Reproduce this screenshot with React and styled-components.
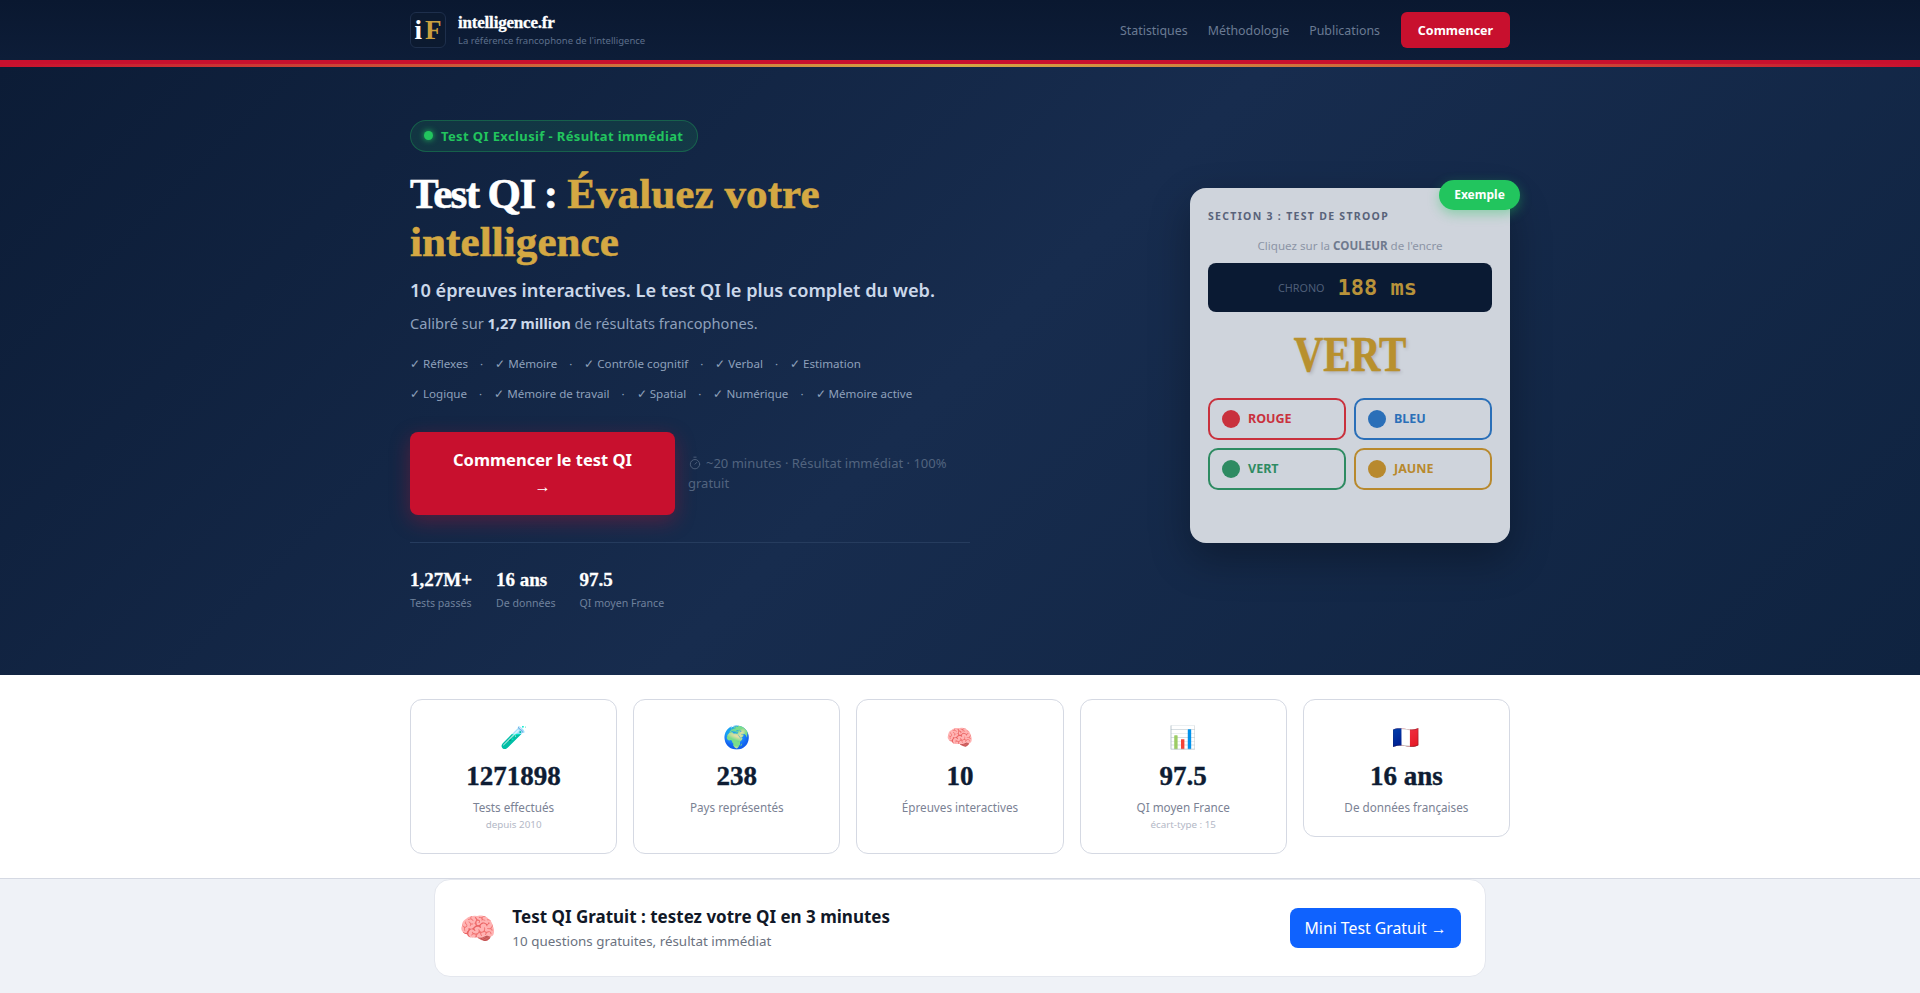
import styled, { createGlobalStyle } from "styled-components";
import { Timer as TimerIcon } from "lucide-react";

const sans = `"Noto Sans", "Liberation Sans", sans-serif`;
const serif = `"Liberation Serif", "DejaVu Serif", serif`;
const emoji = `"Noto Color Emoji", "Noto Sans", sans-serif`;

const GlobalStyle = createGlobalStyle`
  * { box-sizing: border-box; }
  html, body { margin: 0; padding: 0; background: #eff2f7; }
  body { font-family: ${sans}; }
`;

const Container = styled.div`
  width: 1100px;
  margin: 0 auto;
`;

const Nav = styled.nav`
  height: 60px;
  background: linear-gradient(180deg, #0a1830 0%, #0d1d38 100%);
`;

const NavInner = styled(Container)`
  height: 100%;
  display: flex;
  align-items: center;
  justify-content: space-between;
`;

const Brand = styled.div`
  display: flex;
  align-items: center;
  gap: 12px;
`;

const LogoBox = styled.div`
  width: 36px;
  height: 36px;
  border: 1px solid #1e2f4c;
  border-radius: 6px;
  background: #0c1a30;
  display: flex;
  align-items: center;
  justify-content: center;
  gap: 3px;
  font-family: ${serif};
  font-size: 27px;
  font-weight: 700;
  color: #fff;
`;

const LogoAccent = styled.span`
  color: #c9a040;
`;

const BrandText = styled.div`
  display: flex;
  flex-direction: column;
  gap: 1px;
`;

const BrandName = styled.div`
  font-family: ${serif};
  font-size: 17px;
  line-height: 20px;
  font-weight: 700;
  color: #fff;
  letter-spacing: -0.2px;
  -webkit-text-stroke: 0.3px #fff;
`;

const BrandTag = styled.div`
  font-size: 9.5px;
  line-height: 14px;
  color: #5d6f8b;
`;

const NavLinks = styled.div`
  display: flex;
  align-items: center;
  gap: 20px;
`;

const NavLink = styled.a`
  font-size: 12.4px;
  color: #6a7a93;
`;

const NavButton = styled.a`
  width: 109px;
  height: 36px;
  margin-left: 1px;
  border-radius: 6px;
  background: #c8102e;
  color: #fff;
  font-size: 12.5px;
  font-weight: 700;
  display: flex;
  align-items: center;
  justify-content: center;
`;

const RedLine = styled.div`
  height: 4px;
  background: #c8102e;
`;

const GoldLine = styled.div`
  height: 3px;
  background: linear-gradient(90deg, #c8102e 0%, #d4a843 50%, #c8102e 100%);
`;

const Hero = styled.section`
  height: 608px;
  background: linear-gradient(135deg, #0c1c36 0%, #172c4e 50%, #0f2340 100%);
`;

const HeroInner = styled(Container)`
  height: 100%;
  display: flex;
  justify-content: space-between;
  align-items: center;
  padding-bottom: 12px;
`;

const HeroLeft = styled.div`
  width: 560px;
`;

const Badge = styled.div`
  display: inline-flex;
  align-items: center;
  gap: 8px;
  height: 32px;
  padding: 0 14px 0 13px;
  border: 1px solid rgba(34, 197, 94, 0.3);
  border-radius: 16px;
  background: rgba(34, 197, 94, 0.12);
  color: #22c55e;
  font-size: 13px;
  font-weight: 700;
  letter-spacing: 0.38px;
`;

const BadgeDot = styled.span`
  width: 9px;
  height: 9px;
  border-radius: 50%;
  background: #22c55e;
  box-shadow: 0 0 6px #22c55e;
`;

const Title = styled.h1`
  margin: 18px 0 0;
  font-family: ${serif};
  font-size: 43px;
  line-height: 48px;
  font-weight: 700;
  color: #fff;
  -webkit-text-stroke: 0.6px currentColor;
`;

const TitleStart = styled.span`
  letter-spacing: -1.6px;
`;

const Gold = styled.span`
  color: #d4a843;
  letter-spacing: 0.1px;
`;

const Lead = styled.p`
  margin: 10px 0 0;
  font-size: 18.2px;
  line-height: 28px;
  font-weight: 600;
  color: #cbd8ea;
`;

const SubLead = styled.p`
  margin: 7px 0 0;
  font-size: 14.6px;
  line-height: 24px;
  color: #8ea0bb;
`;

const SubStrong = styled.strong`
  color: #cbd8ea;
`;

const Checks = styled.div`
  margin-top: 14px;
`;

const ChecksRow = styled.div`
  display: flex;
  gap: 12px;
  height: 30px;
  align-items: center;
  font-size: 11.6px;
  color: #8ea0bb;
`;

const CheckSep = styled.span`
  margin-right: 12px;
`;

const CtaRow = styled.div`
  display: flex;
  align-items: flex-start;
  gap: 13px;
  margin-top: 23px;
`;

const Cta = styled.a`
  width: 265px;
  height: 83px;
  flex: none;
  border-radius: 8px;
  background: #c8102e;
  box-shadow: 0 6px 20px rgba(200, 16, 46, 0.35);
  color: #fff;
  font-size: 16.5px;
  line-height: 26px;
  font-weight: 700;
  text-align: center;
  padding: 15px 36px;
`;

const CtaNote = styled.p`
  margin: 21px 0 0;
  font-size: 13px;
  line-height: 20px;
  color: #52647f;
`;

const NoteIcon = styled(TimerIcon)`
  width: 14px;
  height: 14px;
  margin-right: 4px;
  vertical-align: -2px;
`;

const HeroStats = styled.div`
  display: flex;
  gap: 24px;
  margin-top: 27px;
  padding-top: 25px;
  border-top: 1px solid #263c5e;
`;

const HeroStatValue = styled.div`
  font-family: ${serif};
  font-size: 19px;
  line-height: 24px;
  font-weight: 700;
  color: #fff;
  -webkit-text-stroke: 0.3px #fff;
`;

const HeroStatLabel = styled.div`
  margin-top: 3px;
  font-size: 10.6px;
  line-height: 16px;
  color: #6f819c;
`;

const DemoCard = styled.div`
  position: relative;
  width: 320px;
  height: 355px;
  padding: 18px;
  border-radius: 16px;
  background: #cfd4dc;
  box-shadow: 0 16px 40px rgba(0, 0, 0, 0.3);
`;

const DemoTag = styled.div`
  position: absolute;
  top: -8px;
  right: -10px;
  height: 30px;
  width: 81px;
  border-radius: 15px;
  background: #22c55e;
  box-shadow: 0 4px 12px rgba(34, 197, 94, 0.4);
  color: #fff;
  font-size: 12px;
  font-weight: 700;
  display: flex;
  align-items: center;
  justify-content: center;
`;

const DemoTitle = styled.div`
  font-size: 10.5px;
  line-height: 20px;
  font-weight: 700;
  letter-spacing: 1.3px;
  color: #59637a;
`;

const DemoHint = styled.div`
  margin-top: 10px;
  font-size: 11.6px;
  line-height: 20px;
  text-align: center;
  color: #8c95a6;
`;

const DemoHintStrong = styled.strong`
  color: #6f7a8e;
`;

const Timer = styled.div`
  margin-top: 7px;
  height: 49px;
  padding-right: 5px;
  border-radius: 8px;
  background: #0a1a33;
  display: flex;
  align-items: center;
  justify-content: center;
  gap: 13px;
`;

const TimerLabel = styled.span`
  font-size: 10.8px;
  color: #4e5e78;
`;

const TimerValue = styled.span`
  font-family: "DejaVu Sans Mono", "Liberation Mono", monospace;
  font-size: 22px;
  font-weight: 700;
  color: #b8923a;
`;

const StroopWord = styled.div`
  margin-top: 13px;
  height: 58px;
  font-family: ${serif};
  font-size: 50px;
  line-height: 58px;
  font-weight: 700;
  text-align: center;
  color: #b8902e;
  text-shadow: 2px 2px 4px rgba(0, 0, 0, 0.15);
  -webkit-text-stroke: 0.6px #b8902e;
  transform: scaleX(0.82);
`;

const Choices = styled.div`
  margin-top: 15px;
  display: grid;
  grid-template-columns: 1fr 1fr;
  gap: 8px;
`;

const Choice = styled.div`
  height: 42px;
  padding: 0 12px;
  display: flex;
  align-items: center;
  gap: 8px;
  border: 2px solid ${(p) => p.$color};
  border-radius: 10px;
  color: ${(p) => p.$color};
  font-size: 12.5px;
  font-weight: 700;
`;

const ChoiceDot = styled.span`
  width: 18px;
  height: 18px;
  border-radius: 50%;
  background: ${(p) => p.$color};
`;

const StatsSection = styled.section`
  height: 203px;
  padding-top: 24px;
  background: #fff;
`;

const StatsGrid = styled(Container)`
  display: grid;
  grid-template-columns: repeat(5, 1fr);
  gap: 16px;
`;

const StatCard = styled.div`
  height: ${(p) => (p.$short ? "138px" : "155px")};
  padding-top: 24px;
  border: 1px solid #d5d9e3;
  border-radius: 12px;
  background: #fff;
  text-align: center;
`;

const StatIcon = styled.div`
  font-family: ${emoji};
  font-size: 22px;
  line-height: 28px;
`;

const StatValue = styled.div`
  margin-top: 7px;
  font-family: ${serif};
  font-size: 27px;
  line-height: 34px;
  font-weight: 700;
  color: #0e1c33;
  -webkit-text-stroke: 0.4px #0e1c33;
`;

const StatLabel = styled.div`
  margin-top: 4px;
  font-size: 11.7px;
  line-height: 20px;
  color: #7b8294;
`;

const StatSub = styled.div`
  margin-top: 0;
  font-size: 9.8px;
  line-height: 16px;
  color: #b3b8c6;
`;

const Band = styled.section`
  height: 115px;
  border-top: 1px solid #d5d9e3;
  background: #eff2f7;
`;

const Promo = styled.div`
  width: 1052px;
  height: 98px;
  margin: 0 auto;
  padding: 0 24px;
  border: 1px solid #e4e7ee;
  border-radius: 16px;
  background: #fff;
  display: flex;
  align-items: center;
`;

const PromoIcon = styled.div`
  font-family: ${emoji};
  font-size: 30px;
  margin-right: 16px;
`;

const PromoText = styled.div`
  flex: 1;
`;

const PromoTitle = styled.div`
  font-size: 17px;
  line-height: 27px;
  font-weight: 700;
  color: #111827;
`;

const PromoSub = styled.div`
  font-size: 13.4px;
  line-height: 23px;
  color: #6b7280;
`;

const PromoButton = styled.a`
  width: 171px;
  height: 40px;
  border-radius: 8px;
  background: #0f62fe;
  color: #fff;
  font-size: 15.8px;
  display: flex;
  align-items: center;
  justify-content: center;
`;

const checksTop = ["Réflexes", "Mémoire", "Contrôle cognitif", "Verbal", "Estimation"];
const checksBottom = ["Logique", "Mémoire de travail", "Spatial", "Numérique", "Mémoire active"];

const choices = [
  { label: "ROUGE", color: "#c9313d" },
  { label: "BLEU", color: "#2a6fb8" },
  { label: "VERT", color: "#2e8b62" },
  { label: "JAUNE", color: "#b8892e" },
];

const stats = [
  { icon: "🧪", value: "1271898", label: "Tests effectués", sub: "depuis 2010" },
  { icon: "🌍", value: "238", label: "Pays représentés" },
  { icon: "🧠", value: "10", label: "Épreuves interactives" },
  { icon: "📊", value: "97.5", label: "QI moyen France", sub: "écart-type : 15" },
  { icon: "🇫🇷", value: "16 ans", label: "De données françaises", short: true },
];

function CheckLine({ items }) {
  return (
    <ChecksRow>
      {items.map((item, i) => (
        <span key={item}>
          {i > 0 && <CheckSep>·</CheckSep>}✓ {item}
        </span>
      ))}
    </ChecksRow>
  );
}

export default function App() {
  return (
    <>
      <GlobalStyle />
      <Nav>
        <NavInner>
          <Brand>
            <LogoBox>
              i<LogoAccent>F</LogoAccent>
            </LogoBox>
            <BrandText>
              <BrandName>intelligence.fr</BrandName>
              <BrandTag>La référence francophone de l'intelligence</BrandTag>
            </BrandText>
          </Brand>
          <NavLinks>
            <NavLink>Statistiques</NavLink>
            <NavLink>Méthodologie</NavLink>
            <NavLink>Publications</NavLink>
            <NavButton>Commencer</NavButton>
          </NavLinks>
        </NavInner>
      </Nav>
      <RedLine />
      <GoldLine />
      <Hero>
        <HeroInner>
          <HeroLeft>
            <Badge>
              <BadgeDot />
              Test QI Exclusif - Résultat immédiat
            </Badge>
            <Title>
              <TitleStart>Test QI :</TitleStart> <Gold>Évaluez votre intelligence</Gold>
            </Title>
            <Lead>10 épreuves interactives. Le test QI le plus complet du web.</Lead>
            <SubLead>
              Calibré sur <SubStrong>1,27 million</SubStrong> de résultats francophones.
            </SubLead>
            <Checks>
              <CheckLine items={checksTop} />
              <CheckLine items={checksBottom} />
            </Checks>
            <CtaRow>
              <Cta>Commencer le test QI →</Cta>
              <CtaNote>
                <NoteIcon strokeWidth={1.5} />~20 minutes · Résultat immédiat · 100% gratuit
              </CtaNote>
            </CtaRow>
            <HeroStats>
              <div>
                <HeroStatValue>1,27M+</HeroStatValue>
                <HeroStatLabel>Tests passés</HeroStatLabel>
              </div>
              <div>
                <HeroStatValue>16 ans</HeroStatValue>
                <HeroStatLabel>De données</HeroStatLabel>
              </div>
              <div>
                <HeroStatValue>97.5</HeroStatValue>
                <HeroStatLabel>QI moyen France</HeroStatLabel>
              </div>
            </HeroStats>
          </HeroLeft>
          <DemoCard>
            <DemoTag>Exemple</DemoTag>
            <DemoTitle>SECTION 3 : TEST DE STROOP</DemoTitle>
            <DemoHint>
              Cliquez sur la <DemoHintStrong>COULEUR</DemoHintStrong> de l'encre
            </DemoHint>
            <Timer>
              <TimerLabel>CHRONO</TimerLabel>
              <TimerValue>188 ms</TimerValue>
            </Timer>
            <StroopWord>VERT</StroopWord>
            <Choices>
              {choices.map((c) => (
                <Choice key={c.label} $color={c.color}>
                  <ChoiceDot $color={c.color} />
                  {c.label}
                </Choice>
              ))}
            </Choices>
          </DemoCard>
        </HeroInner>
      </Hero>
      <StatsSection>
        <StatsGrid>
          {stats.map((s) => (
            <StatCard key={s.label} $short={s.short}>
              <StatIcon>{s.icon}</StatIcon>
              <StatValue>{s.value}</StatValue>
              <StatLabel>{s.label}</StatLabel>
              {s.sub && <StatSub>{s.sub}</StatSub>}
            </StatCard>
          ))}
        </StatsGrid>
      </StatsSection>
      <Band>
        <Promo>
          <PromoIcon>🧠</PromoIcon>
          <PromoText>
            <PromoTitle>Test QI Gratuit : testez votre QI en 3 minutes</PromoTitle>
            <PromoSub>10 questions gratuites, résultat immédiat</PromoSub>
          </PromoText>
          <PromoButton>Mini Test Gratuit →</PromoButton>
        </Promo>
      </Band>
    </>
  );
}
